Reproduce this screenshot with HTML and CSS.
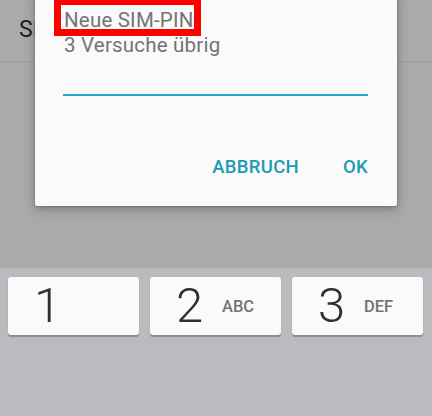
FILE: index.html
```html
<!DOCTYPE html>
<html lang="de">
<head>
    <meta charset="UTF-8">
    <meta name="viewport" content="width=device-width, initial-scale=1.0">
    <title>Neue SIM-PIN</title>
    <link rel="stylesheet" href="styles.css">
</head>
<body>
    <div class="screen">
        <header class="app-bar">
            <span class="app-title">SIM-Karte</span>
        </header>

        <div class="content"></div>

        <div class="dialog">
            <div class="highlight"></div>
            <p class="dialog-title">Neue SIM-PIN</p>
            <p class="dialog-text">3 Versuche übrig</p>
            <div class="pin-input"></div>
            <div class="dialog-actions">
                <button class="action">ABBRUCH</button>
                <button class="action">OK</button>
            </div>
        </div>

        <div class="keyboard">
            <div class="key"><span class="digit">1</span><span class="letters"></span></div>
            <div class="key"><span class="digit">2</span><span class="letters">ABC</span></div>
            <div class="key"><span class="digit">3</span><span class="letters">DEF</span></div>
        </div>
    </div>
</body>
</html>
```

FILE: styles.css
```css
:root {
    --dim-color: #aaaaaa;
    --accent-color: #1c9ab7;
    --line-color: #2aa9c5;
    --dialog-background: #fafafa;
    --keyboard-background: #babbbf;
    --muted-text: #747474;
}

* {
    margin: 0;
    padding: 0;
    box-sizing: border-box;
}

body {
    font-family: Roboto, 'Liberation Sans', sans-serif;
    background-color: var(--dim-color);
    overflow: hidden;
}

.screen {
    position: relative;
    width: 432px;
    height: 416px;
    display: flex;
    flex-direction: column;
}

.app-bar {
    height: 62px;
    border-bottom: 1px solid #9b9b9b;
    padding: 16px 0 0 19px;
}

.app-title {
    font-size: 23px;
    color: #1e1e1e;
}

.content {
    flex: 1;
}

.dialog {
    position: absolute;
    left: 35px;
    top: -10px;
    width: 362px;
    height: 216px;
    padding: 18px 29px 0 29px;
    background: var(--dialog-background);
    border-radius: 2px;
    box-shadow: 0 3px 12px rgba(0, 0, 0, 0.28), 0 1px 3px rgba(0, 0, 0, 0.2);
}

.highlight {
    position: absolute;
    left: 19px;
    top: 6px;
    width: 147px;
    height: 40px;
    border: 7px solid #ff0000;
    border-top-width: 9px;
}

.dialog-title,
.dialog-text {
    font-size: 20.5px;
    letter-spacing: 0.2px;
    line-height: 25px;
    color: var(--muted-text);
}

.pin-input {
    height: 38px;
    border-bottom: 2px solid var(--line-color);
    margin-left: -1px;
}

.dialog-actions {
    display: flex;
    justify-content: flex-end;
    gap: 44px;
    margin-top: 61px;
}

.action {
    background: none;
    border: none;
    font-family: inherit;
    font-size: 18.5px;
    letter-spacing: 0.3px;
    font-weight: 500;
    color: var(--accent-color);
    line-height: 20px;
}

.keyboard {
    height: 148px;
    background: var(--keyboard-background);
    display: grid;
    grid-template-columns: repeat(3, 131px);
    grid-template-rows: 58px;
    gap: 11px;
    padding: 9px 8px 0 8px;
}

.key {
    background: #fafafa;
    border-radius: 3px;
    box-shadow: 0 1.5px 1px rgba(0, 0, 0, 0.25);
    display: flex;
    align-items: center;
    padding-left: 26px;
}

.digit {
    width: 46px;
    font-size: 49px;
    font-weight: 300;
    color: #2f2f2f;
    line-height: 58px;
}

.letters {
    font-size: 16.5px;
    font-weight: 500;
    color: var(--muted-text);
}
```
